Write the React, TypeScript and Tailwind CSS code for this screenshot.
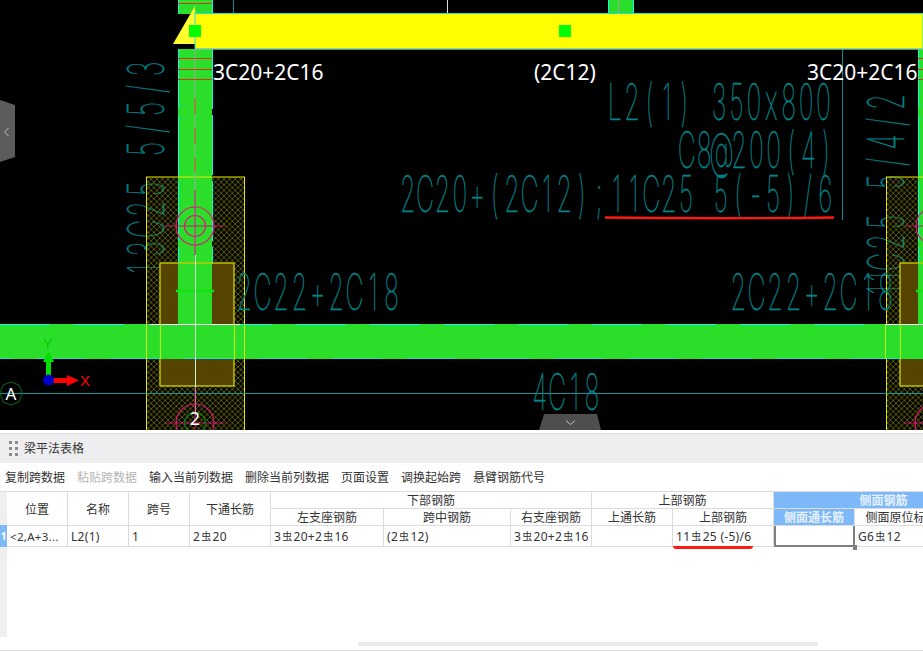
const cadFont = "Inter, 'Liberation Sans', sans-serif"
const squeeze = 0.5

// CAD text is monospaced in the source: every glyph gets its own slot
function CadText({
  x,
  y,
  advance = 17.4,
  steps,
  children,
  rotate,
}: {
  x: number
  y: number
  advance?: number
  steps?: number[]
  children: string
  rotate?: boolean
}) {
  const chars = children.split('')
  const xs = chars.map((_, i) => ((steps ? steps[i] : i * advance) + advance / 2) / squeeze).join(' ')
  return (
    <text
      x={xs}
      y={0}
      fill="#008488"
      stroke="#008488"
      strokeWidth={0.6}
      fontFamily={cadFont}
      fontWeight={100}
      fontSize={50}
      textAnchor="middle"
      transform={`translate(${x} ${y}) ${rotate ? 'rotate(-90) ' : ''}scale(${squeeze} 1)`}
    >
      {children}
    </text>
  )
}

function Label({ x, y, children }: { x: number; y: number; children: string }) {
  return (
    <text x={x} y={y} fill="#fff" fontFamily="'Noto Sans', sans-serif" fontSize={21}>
      {children}
    </text>
  )
}

function Bubble({ cx, cy, label }: { cx: number; cy: number; label?: string }) {
  return (
    <g fill="none">
      <line x1={cx - 30} y1={cy} x2={cx + 30} y2={cy} stroke="#c0186c" />
      <line x1={cx} y1={cy - 36} x2={cx} y2={cy + 30} stroke="#c0186c" />
      <circle cx={cx} cy={cy} r={19} stroke="#e0187c" strokeWidth={1.2} />
      <circle cx={cx} cy={cy} r={10.5} stroke={label ? '#0a7a1a' : '#e0187c'} strokeWidth={1.2} />
      {label && (
        <text x={cx} y={cy + 2} fill="#fff" fontFamily="'Noto Sans', sans-serif" fontSize={18} textAnchor="middle">
          {label}
        </text>
      )}
    </g>
  )
}

// one column with its footing, x is the column's left edge
function Column({ x }: { x: number }) {
  const cx = x + 17
  return (
    <g>
      <rect x={x - 32} y={177} width={98.5} height={253} fill="url(#hatch)" />
      <rect x={x - 18} y={263} width={74} height={123} fill="#544400" />
      <rect x={x} y={49} width={34} height={276} fill="#2ade2a" />
      <line x1={x + 0.5} y1={49} x2={x + 0.5} y2={264} stroke="#19f0e8" strokeDasharray="60 6" />
      <line x1={x + 34.5} y1={49} x2={x + 34.5} y2={264} stroke="#19f0e8" strokeDasharray="60 6" />
      <rect x={x - 31.5} y={177} width={98} height={262} fill="none" stroke="#e6e600" />
      <rect x={x - 18} y={263} width={74} height={123} fill="none" stroke="#c8c800" strokeWidth={1.4} />
      <line x1={cx} y1={49} x2={cx} y2={255} stroke="#9aa89a" />
      <line x1={cx} y1={98} x2={cx} y2={172} stroke="#d0501a" strokeDasharray="16 14" />
      <line x1={x} y1={58.5} x2={x + 34} y2={58.5} stroke="#e03020" />
      <line x1={x} y1={69.5} x2={x + 34} y2={69.5} stroke="#e03020" />
      <line x1={x} y1={79.5} x2={x + 34} y2={79.5} stroke="#e03020" />
      <line x1={x - 2} y1={291} x2={x + 36} y2={291} stroke="#12e012" strokeWidth={2.5} />
      <Bubble cx={cx} cy={226} />
    </g>
  )
}

function CadCanvas() {
  return (
    <svg width={923} height={430} viewBox="0 0 923 430" className="block bg-black">
      <defs>
        <pattern id="hatch" width={5.6} height={5.6} patternUnits="userSpaceOnUse">
          <path d="M0 0L5.6 5.6M5.6 0L0 5.6" stroke="#707000" strokeWidth={0.8} />
        </pattern>
      </defs>

      <CadText x={164} y={279} advance={20} rotate>13C25 5/5/3</CadText>
      <CadText x={904} y={298} advance={20} steps={[-2, 11, 26, 46, 66, 86, 106, 126, 146, 166, 186]} rotate>11C25 5/4/2</CadText>

      <Column x={178} />
      <Column x={918} />

      {/* short column stub above the beam */}
      <rect x={178} y={0} width={34} height={14} fill="#2ade2a" />
      <line x1={178.5} y1={0} x2={178.5} y2={14} stroke="#19f0e8" />
      <line x1={212.5} y1={0} x2={212.5} y2={14} stroke="#19f0e8" />
      <line x1={178} y1={3.5} x2={212} y2={3.5} stroke="#e03020" />
      <rect x={608} y={0} width={26} height={13} fill="#2ade2a" />
      <line x1={608.5} y1={0} x2={608.5} y2={13} stroke="#19f0e8" />
      <line x1={633.5} y1={0} x2={633.5} y2={13} stroke="#19f0e8" />
      <line x1={618.5} y1={0} x2={618.5} y2={13} stroke="#9aa89a" />
      <line x1={233.5} y1={0} x2={233.5} y2={13} stroke="#0a8a90" />
      <line x1={447.5} y1={0} x2={447.5} y2={13} stroke="#dddddd" />
      <line x1={842.5} y1={49} x2={842.5} y2={220} stroke="#0a8a90" />

      {/* selected beam */}
      <polygon points="195,6 173,44 196,44" fill="#ffff30" />
      <rect x={195} y={13.5} width={728} height={35.5} fill="#ffff00" stroke="#19e0d8" />
      <line x1={195} y1={49} x2={923} y2={49} stroke="#9ab8a0" />
      <rect x={189} y={25} width={12} height={12} fill="#00ff00" />
      <rect x={559} y={25} width={12} height={12} fill="#00ff00" />

      {/* long beam */}
      <rect x={0} y={324} width={923} height={35} fill="#2ade2a" />
      <line x1={0} y1={324.5} x2={923} y2={324.5} stroke="#19f0f0" strokeDasharray="50 24" />
      <line x1={0} y1={358.5} x2={923} y2={358.5} stroke="#19e0d8" strokeDasharray="50 24" strokeDashoffset={38} />
      <line x1={150} y1={324.5} x2={240} y2={324.5} stroke="#ffffff" />
      <line x1={886} y1={324.5} x2={923} y2={324.5} stroke="#ffffff" />
      <line x1={146.5} y1={324} x2={146.5} y2={359} stroke="#c8f020" strokeWidth={1.2} />
      <line x1={244.5} y1={324} x2={244.5} y2={359} stroke="#e0f020" />
      <line x1={160.5} y1={324} x2={160.5} y2={359} stroke="#b0e820" strokeWidth={1.2} />
      <line x1={234.5} y1={324} x2={234.5} y2={359} stroke="#c0e820" strokeWidth={1.2} />
      <line x1={885.5} y1={324} x2={885.5} y2={359} stroke="#c8f020" />
      <line x1={900.5} y1={324} x2={900.5} y2={359} stroke="#b0e820" strokeWidth={1.2} />
      <line x1={195.5} y1={255} x2={195.5} y2={415} stroke="#d0f0d0" />
      <line x1={0} y1={393.5} x2={923} y2={393.5} stroke="#0a9a9a" strokeWidth={1.2} />

      <CadText x={606} y={120}>L2(1) 350x800</CadText>
      <CadText x={678} y={168}>C8@200(4)</CadText>
      <CadText x={399} y={212}>2C20+(2C12);11C25 5(-5)/6</CadText>
      <CadText x={235} y={310} advance={18.4}>2C22+2C18</CadText>
      <CadText x={729} y={310} advance={18.4}>2C22+2C18</CadText>
      <CadText x={531} y={410}>4C18</CadText>

      <Label x={213} y={80}>3C20+2C16</Label>
      <Label x={534} y={80}>(2C12)</Label>
      <Label x={807} y={80}>3C20+2C16</Label>

      <path d="M605 217.5 Q720 219 834 217.5" fill="none" stroke="#ff1a10" strokeWidth={2.4} />

      <Bubble cx={195} cy={423} label="2" />
      <Bubble cx={934} cy={423} />

      {/* axis bubble */}
      <polygon points="11,382 19,385 22.5,393 19,402 11,405 3,402 0,393 3,385" fill="none" stroke="#0a6a1a" />
      <text x={11} y={400} fill="#fff" fontFamily="'Noto Sans', sans-serif" fontSize={17} textAnchor="middle">A</text>

      {/* origin gizmo */}
      <rect x={46} y={361} width={5} height={18} fill="#00e000" />
      <polygon points="48.5,351 54,362 43,362" fill="#00e000" />
      <rect x={50} y={378} width={18} height={5} fill="#ff0000" />
      <polygon points="79,380.5 67,375 67,386" fill="#ff0000" />
      <circle cx={48.5} cy={380} r={5.5} fill="#0000c8" />
      <text x={43} y={349} fill="#00d000" fontFamily="'Liberation Sans', sans-serif" fontSize={14}>Y</text>
      <text x={80} y={386} fill="#ff0000" fontFamily="'Liberation Sans', sans-serif" fontSize={15}>X</text>

      {/* collapse handles */}
      <polygon points="0,100 15,105 15,157 0,162" fill="#5c5c5c" />
      <path d="M8.5 128L4.5 132L8.5 136" fill="none" stroke="#c4c4c4" />
      <polygon points="544,414 597,414 601,430 539,430" fill="#4e4e4e" />
      <path d="M566 420.5L570.5 424.5L575 420.5" fill="none" stroke="#c4c4c4" />
    </svg>
  )
}

const toolbar = [
  { label: '复制跨数据' },
  { label: '粘贴跨数据', off: true },
  { label: '输入当前列数据' },
  { label: '删除当前列数据' },
  { label: '页面设置' },
  { label: '调换起始跨' },
  { label: '悬臂钢筋代号' },
]

function Rebar({ children }: { children: string }) {
  // the rebar grade mark is a small raised glyph in the source
  return (
    <>
      {children.split('C').map((part, i) => (
        <span key={i}>
          {i > 0 && <span className="relative top-[-1px] mx-[1px] text-[10px]">虫</span>}
          {part}
        </span>
      ))}
    </>
  )
}

const headCell = 'flex items-center justify-center pt-[2px] border-r border-b border-[#dcdcdc] text-[#333] overflow-hidden whitespace-nowrap'
const dataCell = 'flex items-center pl-[3px] pt-[1px] border-r border-b border-[#dcdcdc] text-[#333] overflow-hidden whitespace-nowrap tracking-[0.3px]'
const activeCell = 'flex items-center justify-center pt-[2px] border-r border-b border-[#dcdcdc] bg-[#7db9f8] text-[#e8f2fd] font-bold overflow-hidden whitespace-nowrap'

function BeamTable() {
  return (
    <div className="relative min-w-0 flex-1 overflow-hidden">
      <div className="grid w-[987px] grid-cols-[61px_61px_61px_81px_113px_127px_81px_81px_101px_81px_94px_45px] grid-rows-[17px_17px_21px] text-[12px]">
        <div className={`${headCell} row-span-2`}>位置</div>
        <div className={`${headCell} row-span-2`}>名称</div>
        <div className={`${headCell} row-span-2`}>跨号</div>
        <div className={`${headCell} row-span-2`}>下通长筋</div>
        <div className={`${headCell} col-span-3`}>下部钢筋</div>
        <div className={`${headCell} col-span-2`}>上部钢筋</div>
        <div className={`${activeCell} col-span-3`}>侧面钢筋</div>

        <div className={headCell}>左支座钢筋</div>
        <div className={headCell}>跨中钢筋</div>
        <div className={headCell}>右支座钢筋</div>
        <div className={headCell}>上通长筋</div>
        <div className={headCell}>上部钢筋</div>
        <div className={activeCell}>侧面通长筋</div>
        <div className={headCell}>侧面原位标注</div>
        <div className={headCell}>拉筋</div>

        <div className={`${dataCell} text-[11.5px]`}>&lt;2,A+3...</div>
        <div className={dataCell}>L2(1)</div>
        <div className={dataCell}>1</div>
        <div className={dataCell}><Rebar>2C20</Rebar></div>
        <div className={dataCell}><Rebar>3C20+2C16</Rebar></div>
        <div className={dataCell}><Rebar>(2C12)</Rebar></div>
        <div className={dataCell}><Rebar>3C20+2C16</Rebar></div>
        <div className={dataCell}></div>
        <div className={dataCell}><Rebar>11C25 (-5)/6</Rebar></div>
        <div className="border-2 border-t-0 border-[#7f7f7f]"></div>
        <div className={dataCell}><Rebar>G6C12</Rebar></div>
        <div className={dataCell}></div>
      </div>

      {/* fill handle of the selected cell */}
      <div className="absolute left-[846px] top-[53px] h-[5px] w-[4px] bg-[#7f7f7f]"></div>
      {/* hand drawn underline */}
      <div className="absolute left-[666px] top-[54px] h-[3px] w-[80px] rounded-b-full bg-[#ff1a10]"></div>
    </div>
  )
}

export default function App() {
  return (
    <div className="flex h-[651px] w-[923px] flex-col overflow-hidden bg-white font-['Noto_Sans','Noto_Sans_CJK_SC',sans-serif]">
      <CadCanvas />

      <div className="h-[4px] border-b border-[#dcdcdc] bg-white"></div>

      <div className="flex h-[29px] items-center bg-[#eeeef0] pl-[9px] text-[12px] text-[#333]">
        <div className="grid grid-cols-2 gap-x-[3px] gap-y-[3px]">
          {[0, 1, 2, 3, 4, 5].map((d) => (
            <span key={d} className="h-[3px] w-[3px] bg-[#8c8c8c]"></span>
          ))}
        </div>
        <span className="ml-[6px] pt-[1px]">梁平法表格</span>
      </div>

      <div className="flex h-[28px] items-center gap-[12px] pl-[5px] pt-[1px] text-[12px] text-[#333]">
        {toolbar.map((item) => (
          <span key={item.label} className={item.off ? 'text-[#b4b4b4]' : ''}>{item.label}</span>
        ))}
      </div>

      <div className="flex h-[146px] border-t border-[#dcdcdc]">
        <div className="flex w-[7px] flex-col bg-[#efefef]">
          <div className="h-[33px]"></div>
          <div className="flex h-[22px] items-center justify-center bg-[#7db9f8] text-[10px] font-bold text-white">1</div>
        </div>
        <BeamTable />
      </div>

      <div className="flex-1 pt-[5px]">
        <div className="ml-[358px] h-[4px] w-[460px] rounded-full bg-[#ebebeb]"></div>
      </div>
      <div className="h-[1px] bg-[#dcdcdc]"></div>
    </div>
  )
}
